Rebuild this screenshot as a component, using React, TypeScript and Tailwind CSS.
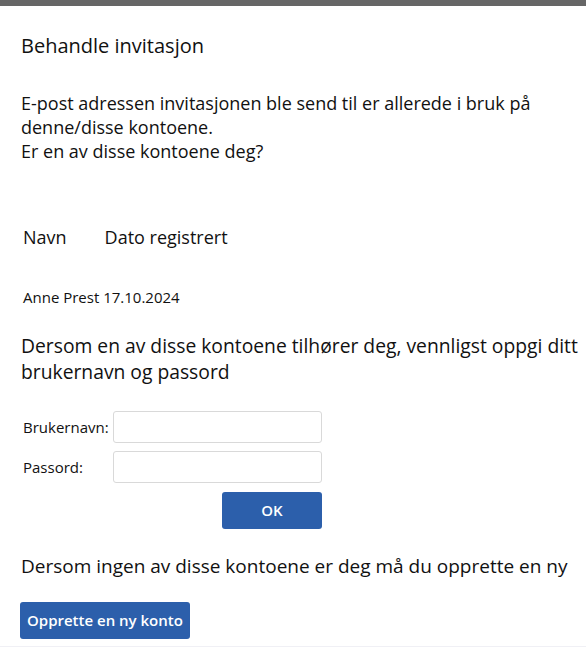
export default function App() {
  return (
    <div className="min-h-[649px] w-[586px] bg-white font-['Open_Sans',sans-serif] text-[#111]">
      <div className="h-[6px] bg-[#666666]" />
      <div className="pl-[21px] pr-[8px]">
        <h1 className="pt-[28px] text-[20px] leading-[24px]">Behandle invitasjon</h1>

        <div className="mt-[33px] pr-[20px] text-[18px] leading-[24px]">
          <p>
            E-post adressen invitasjonen ble send til er allerede i bruk på denne/disse kontoene.
          </p>
          <p>Er en av disse kontoene deg?</p>
        </div>

        <div className="mt-[62px] flex gap-[38px] pl-[2px] text-[18px] leading-[24px]">
          <span>Navn</span>
          <span>Dato registrert</span>
        </div>

        <p className="mt-[38px] pl-[2px] text-[15px] leading-[20px]">Anne Prest 17.10.2024</p>

        <p className="mt-[26px] text-[19.3px] leading-[26px]">
          Dersom en av disse kontoene tilhører deg, vennligst oppgi ditt brukernavn og passord
        </p>

        <div className="mt-[26px] flex w-[301px] flex-col gap-[8px] pl-[2px]">
          <div className="flex items-center">
            <label className="w-[90px] text-[15px]">Brukernavn:</label>
            <input className="h-[32px] w-[209px] rounded-[3px] border border-[#d9d9d9] px-2 outline-none" />
          </div>
          <div className="flex items-center">
            <label className="w-[90px] text-[15px]">Passord:</label>
            <input
              type="password"
              className="h-[32px] w-[209px] rounded-[3px] border border-[#d9d9d9] px-2 outline-none"
            />
          </div>
          <div className="mt-[1px] flex justify-end">
            <button className="h-[37px] w-[100px] rounded-[3px] bg-[#2c5fab] text-[15px] font-semibold text-white">
              OK
            </button>
          </div>
        </div>

        <p className="mt-[24px] text-[19px] leading-[26px]">
          Dersom ingen av disse kontoene er deg må du opprette en ny
        </p>

        <button className="mt-[23px] ml-[-1px] h-[37px] rounded-[3px] bg-[#2c5fab] px-[7px] text-[15px] font-semibold text-white">
          Opprette en ny konto
        </button>
      </div>
      <div className="mt-[7px] h-px bg-[#f0f0f5]" />
    </div>
  );
}
